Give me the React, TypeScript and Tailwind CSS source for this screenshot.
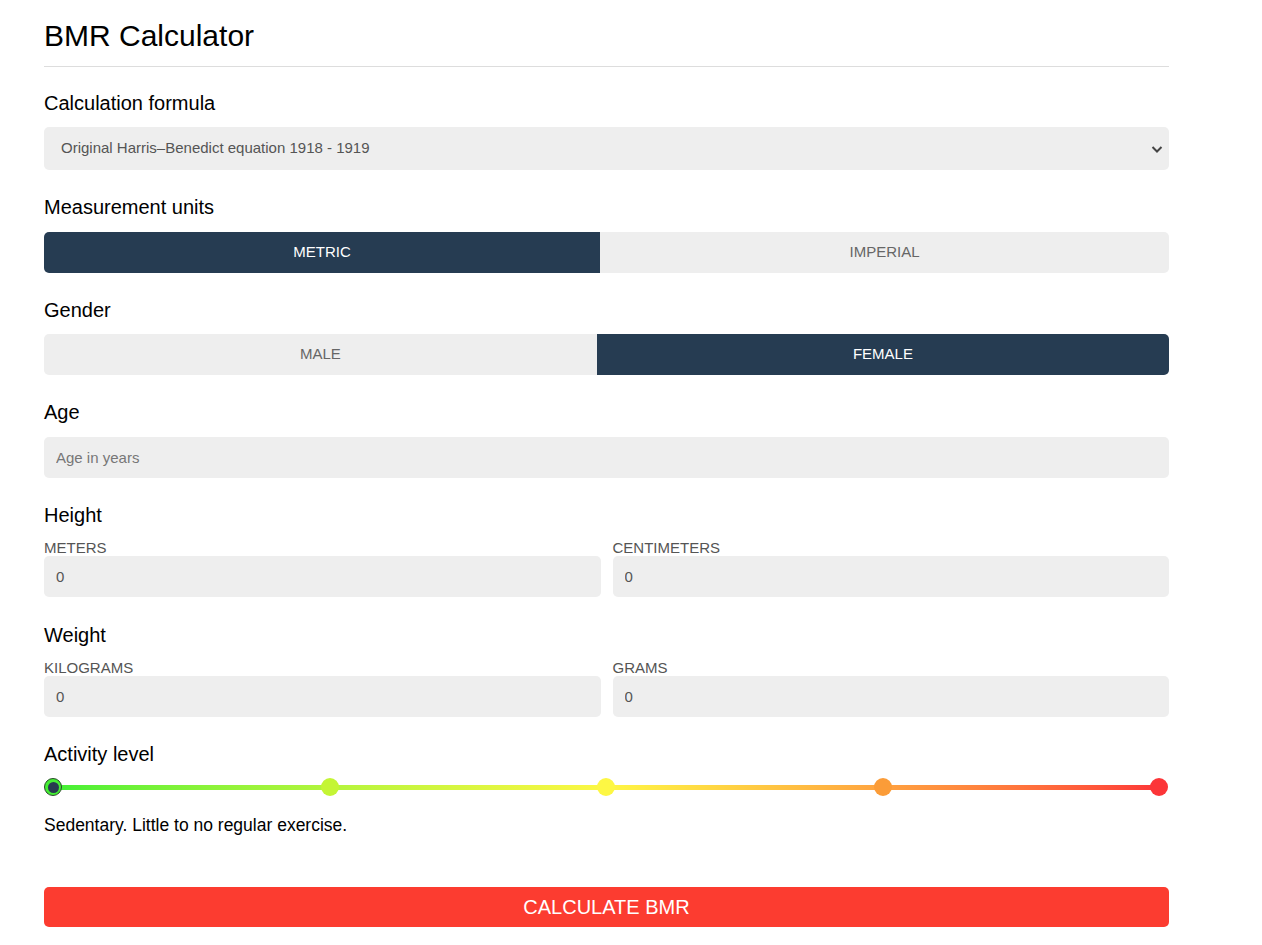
import React, { useState } from 'react';

const FONT = { fontFamily: '"Liberation Sans", Arial, sans-serif' };

// Activity levels, left to right on the slider
const LEVELS = [
  { color: 'bg-[#44ee33]', text: 'Sedentary. Little to no regular exercise.' },
  { color: 'bg-[#c4f535]', text: 'Lightly active. Light exercise 1-3 days a week.' },
  { color: 'bg-[#fdf744]', text: 'Moderately active. Moderate exercise 3-5 days a week.' },
  { color: 'bg-[#fb9c38]', text: 'Very active. Hard exercise 6-7 days a week.' },
  { color: 'bg-[#fc3538]', text: 'Extra active. Very hard exercise or physical job.' },
];

function Toggle({ options, value, onChange }: { options: string[]; value: number; onChange: (i: number) => void }) {
  return (
    <div className="flex h-[41px] rounded-[5px] overflow-hidden">
      {options.map((opt, i) => (
        <button
          key={opt}
          onClick={() => onChange(i)}
          className={`flex-auto px-4 text-[15px] ${
            value === i ? 'bg-[#263c52] text-white' : 'bg-[#eeeeee] text-[#666666]'
          }`}
        >
          {opt}
        </button>
      ))}
    </div>
  );
}

function Field({ placeholder, value }: { placeholder?: string; value?: string }) {
  return (
    <input
      defaultValue={value}
      placeholder={placeholder}
      className="block w-full h-[41px] px-3 rounded-[5px] bg-[#eeeeee] text-[15px] text-[#555555] placeholder:text-[#777777] outline-none"
    />
  );
}

function Label({ children }: { children: React.ReactNode }) {
  return <div className="text-[20px] leading-[24px] text-black">{children}</div>;
}

function SubLabel({ children }: { children: React.ReactNode }) {
  return <div className="text-[15px] leading-[17px] text-[#555555]">{children}</div>;
}

export default function App() {
  const [units, setUnits] = useState(0);
  const [gender, setGender] = useState(1);
  const [level, setLevel] = useState(0);

  return (
    <div className="min-h-screen bg-white" style={FONT}>
      <div className="ml-[44px] w-[1125px] pt-[19px]">
        <h1 className="text-[30px] leading-[34px] text-black pb-[13px] border-b border-[#dddddd]">BMR Calculator</h1>

        <div className="mt-[24px]">
          <Label>Calculation formula</Label>
          <div className="relative mt-3">
            <select className="block w-full h-[43px] pl-[17px] pr-10 rounded-[5px] bg-[#eeeeee] text-[15px] text-[#555555] appearance-none outline-none">
              <option>Original Harris–Benedict equation 1918 - 1919</option>
              <option>Revised Harris–Benedict equation 1984</option>
              <option>Mifflin St Jeor equation 1990</option>
            </select>
            <svg className="absolute right-[6px] top-[16px] w-3 h-3 pointer-events-none" viewBox="0 0 12 12" fill="none">
              <path d="M1.5 4l4.5 4.5L10.5 4" stroke="#444" strokeWidth="2" />
            </svg>
          </div>
        </div>

        <div className="mt-[25px]">
          <Label>Measurement units</Label>
          <div className="mt-[13px]">
            <Toggle options={['METRIC', 'IMPERIAL']} value={units} onChange={setUnits} />
          </div>
        </div>

        <div className="mt-[25px]">
          <Label>Gender</Label>
          <div className="mt-3">
            <Toggle options={['MALE', 'FEMALE']} value={gender} onChange={setGender} />
          </div>
        </div>

        <div className="mt-[25px]">
          <Label>Age</Label>
          <div className="mt-[13px]">
            <Field placeholder="Age in years" />
          </div>
        </div>

        <div className="mt-[25px]">
          <Label>Height</Label>
          <div className="mt-3 grid grid-cols-2 gap-x-3">
            <div>
              <SubLabel>METERS</SubLabel>
              <Field value="0" />
            </div>
            <div>
              <SubLabel>CENTIMETERS</SubLabel>
              <Field value="0" />
            </div>
          </div>
        </div>

        <div className="mt-[26px]">
          <Label>Weight</Label>
          <div className="mt-3 grid grid-cols-2 gap-x-3">
            <div>
              <SubLabel>KILOGRAMS</SubLabel>
              <Field value="0" />
            </div>
            <div>
              <SubLabel>GRAMS</SubLabel>
              <Field value="0" />
            </div>
          </div>
        </div>

        <div className="mt-[25px]">
          <Label>Activity level</Label>
          <div className="relative mt-3 w-[1124px] h-[18px]">
            <div className="absolute left-[9px] right-[9px] top-[7px] h-[5px] bg-gradient-to-r from-[#3ef035] via-[#fdf744] to-[#fc3538]" />
            <div className="relative flex justify-between">
              {LEVELS.map((l, i) => (
                <button
                  key={i}
                  onClick={() => setLevel(i)}
                  className={`w-[18px] h-[18px] rounded-full ${l.color} ${
                    level === i ? 'flex items-center justify-center border border-[#2a4a2a]' : ''
                  }`}
                >
                  {level === i && <span className="block w-[11px] h-[11px] rounded-full bg-[#283a50]" />}
                </button>
              ))}
            </div>
          </div>
          <div className="mt-[19px] text-[17.5px] leading-[20px] text-black">{LEVELS[level].text}</div>
        </div>

        <button className="mt-[52px] w-full h-[40px] rounded-[5px] bg-[#fc3c30] text-white text-[20px]">
          CALCULATE BMR
        </button>
      </div>
    </div>
  );
}
